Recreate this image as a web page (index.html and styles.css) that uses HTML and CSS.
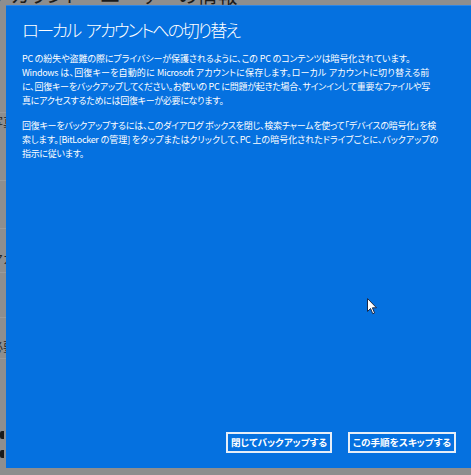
FILE: index.html
```html
<!DOCTYPE html>
<html lang="ja">
<head>
<meta charset="utf-8">
<link rel="stylesheet" href="styles.css">
</head>
<body>
<div class="page">
  <h1 class="page-title">アカウント &gt; ユーザーの情報</h1>
  <div class="bg-list">
    <div class="bg-row r1"><span class="frag">写真</span></div>
    <div class="bg-row r2"></div>
    <div class="bg-row r3"><span class="frag">アカ</span></div>
    <div class="bg-row r4"></div>
    <div class="bg-row r5"><span class="frag">必要</span></div>
    <div class="bg-row r6"></div>
    <div class="bg-icons"><span class="ic ic1"></span><span class="ic ic2"></span></div>
  </div>
</div>

<div class="dialog">
  <h2 class="dlg-title">ローカル アカウントへの切り替え</h2>
  <p class="dlg-text">
    <span class="ln w388">PC の紛失や盗難の際にプライバシーが保護されるように、この PC のコンテンツは暗号化されています。</span>
    <span class="ln w407">Windows は、回復キーを自動的に Microsoft アカウントに保存します。ローカル アカウントに切り替える前</span>
    <span class="ln w408">に、回復キーをバックアップしてください。お使いの PC に問題が起きた場合、サインインして重要なファイルや写</span>
    <span class="ln w201">真にアクセスするためには回復キーが必要になります。</span>
  </p>
  <p class="dlg-text">
    <span class="ln w414">回復キーをバックアップするには、このダイアログ ボックスを閉じ、検索チャームを使って「デバイスの暗号化」を検</span>
    <span class="ln w416">索します。[BitLocker の管理] をタップまたはクリックして、PC 上の暗号化されたドライブごとに、バックアップの</span>
    <span class="ln">指示に従います。</span>
  </p>
  <div class="dlg-actions">
    <button class="dlg-btn b1">閉じてバックアップする</button>
    <button class="dlg-btn b2">この手順をスキップする</button>
  </div>
</div>

<svg class="cursor" width="11" height="17" viewBox="0 0 11 17">
  <path d="M0.5 0.5 L0.5 13.5 L3.5 10.5 L5.8 15.8 L7.6 15 L5.4 9.8 L9.5 9.8 Z" fill="#fff" stroke="#1b2a4a" stroke-width="1"/>
</svg>
</body>
</html>
```

FILE: styles.css
```css
html, body {
  margin: 0;
  padding: 0;
}
body {
  width: 471px;
  height: 475px;
  overflow: hidden;
  background: #8e8e8e;
  font-family: "Noto Sans CJK JP", sans-serif;
  position: relative;
}
.page {
  padding: 0;
  overflow: hidden;
}
.page-title {
  margin: -18px 0 0 -8px;
  font-size: 20px;
  font-weight: normal;
  color: #1a1a1a;
  line-height: 26px;
  white-space: nowrap;
  font-feature-settings: "palt";
}
.bg-list {
  display: flex;
  flex-direction: column;
  margin-top: 104px;
}
.bg-row {
  border-top: 1px solid #9a9a9a;
  box-sizing: border-box;
  display: flex;
  align-items: flex-start;
}
.frag {
  margin-left: -9px;
  font-size: 12px;
  line-height: 16px;
  color: #222;
  white-space: nowrap;
}
.r1 { height: 68px; padding-top: 1px; }
.r2 { height: 48px; }
.r3 { height: 44px; padding-top: 22px; }
.r4 { height: 45px; }
.r5 { height: 41px; padding-top: 21px; }
.r6 { height: 47px; }
.bg-icons {
  display: flex;
  flex-direction: column;
  gap: 11px;
  padding-top: 26px;
}
.ic {
  display: block;
  width: 4px;
  height: 8px;
  background: #1a1a1a;
  border-radius: 2px 0 0 2px;
}
.dialog {
  position: absolute;
  left: 6px;
  top: 5px;
  right: 0;
  bottom: 7px;
  background: #0571e0;
  border-top: 1px solid #2d86e6;
  box-sizing: border-box;
  display: flex;
  flex-direction: column;
  padding: 12px 15px 15px 16px;
  color: #fff;
  font-family: "Noto Sans CJK JP", sans-serif;
  font-feature-settings: "palt";
}
.dlg-title {
  margin: 0 0 10px;
  font-size: 17.5px;
  line-height: 24px;
  font-weight: 300;
  letter-spacing: -2.2px;
  word-spacing: 4px;
  white-space: nowrap;
}
.dlg-text {
  margin: 0 0 11px;
  font-size: 9px;
  line-height: 14px;
  letter-spacing: -0.3px;
}
.ln {
  display: block;
  white-space: nowrap;
}
.w388, .w407, .w408, .w201, .w414, .w416 {
  white-space: normal;
  text-align: justify;
  text-align-last: justify;
  text-justify: inter-character;
}
.w201 { letter-spacing: -0.8px; }
.w388 { width: 388px; }
.w407 { width: 407px; }
.w408 { width: 408px; }
.w201 { width: 201px; }
.w414 { width: 414px; }
.w416 { width: 416px; }
.dlg-actions {
  margin-top: auto;
  display: flex;
  justify-content: flex-end;
  gap: 16px;
}
.dlg-btn {
  height: 21px;
  box-sizing: border-box;
  border: 2px solid #e6eef8;
  background: #0571e0;
  color: #fff;
  font-family: "Noto Sans CJK JP", sans-serif;
  font-feature-settings: "palt";
  font-weight: bold;
  font-size: 9.6px;
  line-height: 15px;
  padding: 0;
  white-space: nowrap;
}
.b1 { width: 106px; }
.b2 { width: 108px; }
.cursor {
  position: absolute;
  left: 367px;
  top: 298px;
}
```
